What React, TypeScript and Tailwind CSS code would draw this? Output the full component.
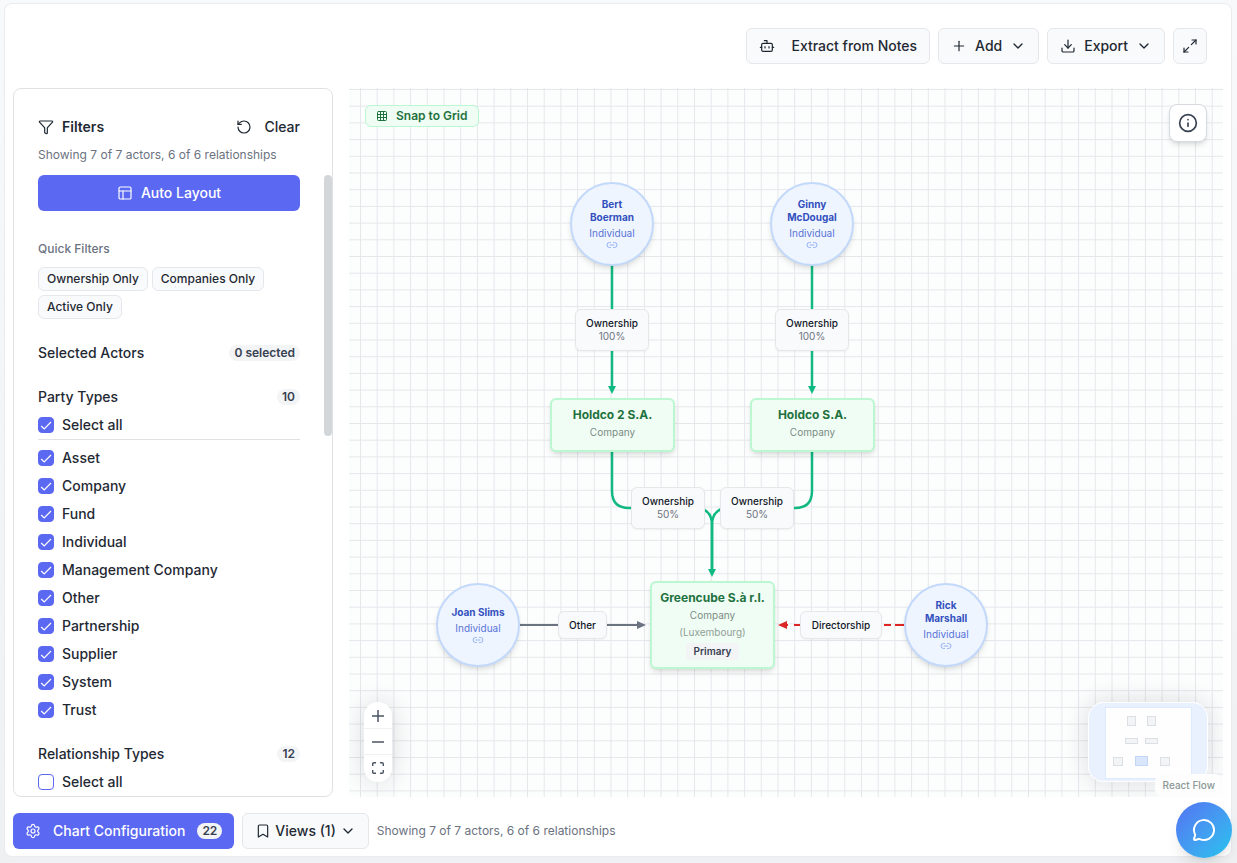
import React, { useState } from "react";
import {
  Bookmark,
  Bot,
  ChevronDown,
  Download,
  Funnel,
  Grid3x3,
  Info,
  Link2,
  Maximize2,
  MessageCircle,
  PanelsTopLeft,
  Plus,
  RotateCcw,
  Settings,
} from "lucide-react";

const secondaryButton =
  "flex h-9 items-center rounded-md border border-[#e5e7eb] bg-[#f9fafb] text-sm font-medium text-[#1f2933] hover:bg-gray-100";

const partyTypes = [
  "Asset",
  "Company",
  "Fund",
  "Individual",
  "Management Company",
  "Other",
  "Partnership",
  "Supplier",
  "System",
  "Trust",
];

function CheckRow({ label, defaultChecked = false }: { label: string; defaultChecked?: boolean }) {
  const [checked, setChecked] = useState(defaultChecked);
  return (
    <label className="flex h-5 items-center gap-2 text-sm font-medium">
      <span className="relative flex size-4 shrink-0">
        <input
          type="checkbox"
          checked={checked}
          onChange={(e) => setChecked(e.target.checked)}
          className="peer size-4 appearance-none rounded-sm border border-[#5b68f1] bg-white checked:bg-[#5b68f1]"
        />
        <svg
          viewBox="0 0 16 16"
          className="pointer-events-none absolute inset-0 hidden size-4 peer-checked:block"
          fill="none"
          stroke="#ffffff"
          strokeWidth="1.2"
          aria-hidden="true"
        >
          <path d="M3.2 9l3 3 6.8-7" />
        </svg>
      </span>
      {label}
    </label>
  );
}

function CountBadge({ children }: { children: React.ReactNode }) {
  return (
    <span className="flex h-4 items-center rounded-full bg-[#f3f4f6] px-[5px] text-xs font-semibold text-[#374151]">
      {children}
    </span>
  );
}

function Filters() {
  return (
    <aside className="flex w-80 shrink-0 flex-col overflow-hidden rounded-lg border border-[#dfe1e5] bg-white">
      <div className="flex flex-col pt-7 pr-8 pl-6">
        <div className="flex h-5 items-center justify-between text-sm font-semibold">
          <h2 className="flex items-center gap-2">
            <Funnel size={16} strokeWidth={1.8} />
            Filters
          </h2>
          <button type="button" className="flex items-center gap-3 font-medium">
            <RotateCcw size={16} strokeWidth={1.8} />
            Clear
          </button>
        </div>
        <p className="mt-2 text-xs leading-5 whitespace-nowrap text-[#6b7280]">
          Showing 7 of 7 actors, 6 of 6 relationships
        </p>
      </div>
      <div className="mt-[10px] flex min-h-0 flex-1">
        <div className="min-w-0 flex-1 overflow-hidden pl-6">
          <button
            type="button"
            className="flex h-9 w-full items-center justify-center gap-2 rounded-md bg-[#5b68f1] text-sm font-medium text-white"
          >
            <PanelsTopLeft size={16} strokeWidth={1.8} />
            Auto Layout
          </button>

          <h3 className="mt-7 text-xs leading-5 font-medium text-[#6b7280]">Quick Filters</h3>
          <div className="mt-2 flex flex-wrap gap-1">
            {["Ownership Only", "Companies Only", "Active Only"].map((label) => (
              <button
                key={label}
                type="button"
                className="h-6 rounded-md border border-[#e5e7eb] bg-[#f9fafb] px-2 text-xs font-medium"
              >
                {label}
              </button>
            ))}
          </div>

          <div className="mt-6 flex h-5 items-center justify-between text-sm font-medium">
            <h3>Selected Actors</h3>
            <CountBadge>0 selected</CountBadge>
          </div>

          <div className="mt-6 flex h-5 items-center justify-between text-sm font-medium">
            <h3>Party Types</h3>
            <CountBadge>10</CountBadge>
          </div>
          <div className="mt-2 border-b border-[#dfe1e5] pb-1">
            <CheckRow label="Select all" defaultChecked />
          </div>
          <div className="mt-2 flex flex-col gap-2">
            {partyTypes.map((type) => (
              <CheckRow key={type} label={type} defaultChecked />
            ))}
          </div>

          <div className="mt-6 flex h-5 items-center justify-between text-sm font-medium">
            <h3>Relationship Types</h3>
            <CountBadge>12</CountBadge>
          </div>
          <div className="mt-2 border-b border-[#dfe1e5] pb-1">
            <CheckRow label="Select all" />
          </div>
        </div>
        <div className="ml-6 w-2 shrink-0">
          <div className="h-[42%] rounded-full bg-[#d3d7d9]" />
        </div>
      </div>
    </aside>
  );
}

function PersonNode({ name, className }: { name: string; className: string }) {
  return (
    <div
      className={`absolute flex size-[84px] flex-col items-center justify-center rounded-full border-2 border-[#c3d9fb] bg-[#eff5ff] text-center shadow-md ${className}`}
    >
      <strong className="w-16 text-[10px] leading-[13px] font-bold text-[#3350bd]">{name}</strong>
      <span className="mt-[3px] text-[10px] leading-[13px] text-[#5874d8]">Individual</span>
      <Link2 size={12} strokeWidth={2} className="-my-px text-[#93b1f3]" />
    </div>
  );
}

function CompanyNode({
  name,
  className,
  children,
}: {
  name: string;
  className: string;
  children?: React.ReactNode;
}) {
  return (
    <div
      className={`absolute flex w-[125px] flex-col items-center rounded-md border-2 border-[#bbf7d0] bg-[#f0fdf4] pt-[7px] text-center shadow-md ${className}`}
    >
      <strong className="text-xs leading-4 font-bold whitespace-nowrap text-[#1f7240]">{name}</strong>
      <span className="mt-[3px] text-[10px] leading-[13px] text-[#7b8b85]">Company</span>
      {children}
    </div>
  );
}

function EdgeLabel({ title, value, className }: { title: string; value?: string; className: string }) {
  return (
    <div
      className={`absolute flex flex-col items-center justify-center rounded-md border border-[#e5e7eb] bg-[#f9fafb] text-[10px] leading-[13px] shadow-xs ${className}`}
    >
      <span className="font-medium text-[#111827]">{title}</span>
      {value && <span className="text-[#6b7280]">{value}</span>}
    </div>
  );
}

function Edges() {
  return (
    <svg className="absolute inset-0 size-full" aria-hidden="true">
      <defs>
        <pattern id="grid" x="11" y="1" width="16.7" height="16.7" patternUnits="userSpaceOnUse">
          <path d="M0.5 0V16.7M0 0.5H16.7" stroke="#e5e7eb" strokeWidth="1" />
        </pattern>
      </defs>
      <rect width="100%" height="100%" fill="url(#grid)" />
      <g fill="none" stroke="#10b981" strokeWidth="2.5">
        <path d="M263 177V302" />
        <path d="M463 177V302" />
        <path d="M263 362V403Q263 420 280 420H346Q363 420 363 437V484" />
        <path d="M463 362V403Q463 420 446 420H380Q363 420 363 437V484" />
      </g>
      <g fill="#10b981">
        <path d="M259 298h8l-4 8z" />
        <path d="M459 298h8l-4 8z" />
        <path d="M359 481h8l-4 8z" />
      </g>
      <path d="M171 537H292" stroke="#6b7280" strokeWidth="1.8" />
      <path d="M288 533v8l9-4z" fill="#6b7280" />
      <path d="M555 537H433" stroke="#dc2626" strokeWidth="1.8" strokeDasharray="9 4 7 84 6 6 6 0" />
      <path d="M438 533v8l-9-4z" fill="#dc2626" />
    </svg>
  );
}

function MiniMap() {
  return (
    <svg viewBox="0 0 120 80" className="h-20 w-[120px]" role="img" aria-label="Mini map">
      <rect x="0.5" y="0.5" width="119" height="79" rx="15" fill="#eaf1fe" stroke="#ffffff" />
      <rect x="17.5" y="5.5" width="86" height="71" fill="#fefefe" stroke="#c7dafb" strokeDasharray="1 1" />
      <g fill="#f3f4f6" stroke="#dcdfe4">
        <rect x="39.5" y="14.5" width="8" height="9" />
        <rect x="59.5" y="14.5" width="8" height="9" />
        <rect x="37.5" y="36.5" width="12" height="5" />
        <rect x="57.5" y="36.5" width="12" height="5" />
        <rect x="25.5" y="55.5" width="9" height="8" />
        <rect x="72.5" y="55.5" width="9" height="8" />
      </g>
      <rect x="47.5" y="54.5" width="12" height="9" fill="#dae6fb" stroke="#c3d6f8" />
    </svg>
  );
}

function Canvas() {
  return (
    <section className="relative min-w-0 flex-1 overflow-hidden bg-[#fcfdfd]" aria-label="Ownership chart">
      <Edges />

      <PersonNode name="Bert Boerman" className="top-[94px] left-[221px]" />
      <PersonNode name="Ginny McDougal" className="top-[94px] left-[421px]" />
      <PersonNode name="Joan Slims" className="top-[495px] left-[87px]" />
      <PersonNode name="Rick Marshall" className="top-[495px] left-[555px]" />

      <CompanyNode name="Holdco 2 S.A." className="top-[310px] left-[201px] h-[54px]" />
      <CompanyNode name="Holdco S.A." className="top-[310px] left-[401px] h-[54px]" />
      <CompanyNode name="Greencube S.à r.l." className="top-[493px] left-[301px] h-[88px]">
        <span className="mt-1 text-[10px] leading-[13px] text-[#8f9e98]">(Luxembourg)</span>
        <span className="mt-1 rounded-sm bg-[#f3f4f6] px-2 text-[10px] leading-[17px] font-semibold text-[#374151]">
          Primary
        </span>
      </CompanyNode>

      <EdgeLabel title="Ownership" value="100%" className="top-[221px] left-[226px] h-[42px] w-[74px]" />
      <EdgeLabel title="Ownership" value="100%" className="top-[221px] left-[426px] h-[42px] w-[74px]" />
      <EdgeLabel title="Ownership" value="50%" className="top-[399px] left-[282px] h-[42px] w-[74px]" />
      <EdgeLabel title="Ownership" value="50%" className="top-[399px] left-[371px] h-[42px] w-[74px]" />
      <EdgeLabel title="Other" className="top-[523px] left-[209px] h-7 w-[49px]" />
      <EdgeLabel title="Directorship" className="top-[523px] left-[451px] h-7 w-[82px]" />

      <button
        type="button"
        className="absolute top-[17px] left-4 flex h-[22px] items-center gap-2 rounded-md border border-[#bbf7d0] bg-[#f0fdf4] px-[10px] text-xs font-semibold text-[#1f7240]"
      >
        <Grid3x3 size={12} strokeWidth={2} />
        Snap to Grid
      </button>

      <button
        type="button"
        aria-label="Chart information"
        className="absolute top-4 right-4 flex size-[38px] items-center justify-center rounded-lg border border-[#d7dade] bg-white text-[#374151] shadow-md"
      >
        <Info size={20} strokeWidth={2} />
      </button>

      <div className="absolute bottom-[15px] left-[15px] flex w-7 flex-col overflow-hidden rounded-full bg-white py-px text-[#4b5563] shadow-[0_0_24px_rgba(31,41,55,0.16)]">
        <button type="button" aria-label="Zoom in" className="flex h-[26px] items-center justify-center border-b border-[#f0f1f3]">
          <svg width="12" height="12" viewBox="0 0 12 12" stroke="currentColor" strokeWidth="1.5">
            <path d="M6 0v12M0 6h12" />
          </svg>
        </button>
        <button type="button" aria-label="Zoom out" className="flex h-[26px] items-center justify-center border-b border-[#f0f1f3]">
          <svg width="12" height="12" viewBox="0 0 12 12" stroke="currentColor" strokeWidth="1.5">
            <path d="M0 6h12" />
          </svg>
        </button>
        <button type="button" aria-label="Fit view" className="flex h-[26px] items-center justify-center">
          <svg width="12" height="12" viewBox="0 0 12 12" fill="none" stroke="currentColor" strokeWidth="1.4">
            <path d="M0.7 4V2Q0.7 0.7 2 0.7H4M8 0.7h2Q11.3 0.7 11.3 2v2M11.3 8v2q0 1.3-1.3 1.3H8M4 11.3H2Q0.7 11.3 0.7 10V8" />
          </svg>
        </button>
      </div>

      <div className="absolute right-[15px] bottom-[15px] rounded-2xl shadow-[0_0_24px_rgba(31,41,55,0.16)]">
        <MiniMap />
      </div>
      <a
        href="https://reactflow.dev"
        className="absolute right-0 bottom-0 flex h-[23px] items-center rounded-lg bg-[#fdfdfd] px-2 text-[10px] font-medium text-[#8b9895]"
      >
        React Flow
      </a>
    </section>
  );
}

export default function App() {
  return (
    <div className="h-screen min-h-[600px] bg-linear-to-b from-[#f8f9fb] to-[#eff0f2] pt-[3px] pr-[5px] pb-[6px] pl-1 font-['Inter',sans-serif] text-[#1f2933]">
      <div className="flex h-full flex-col rounded-lg border border-[#e9ebee] bg-white px-2 pb-[7px]">
        <header className="flex shrink-0 justify-end gap-2 py-6 pr-4">
          <button type="button" className={`${secondaryButton} gap-4 px-3`}>
            <Bot size={16} strokeWidth={1.8} />
            Extract from Notes
          </button>
          <button type="button" className={`${secondaryButton} gap-2 px-3`}>
            <Plus size={16} strokeWidth={1.8} />
            Add
            <ChevronDown size={16} strokeWidth={2} />
          </button>
          <button type="button" className={`${secondaryButton} gap-2 px-3`}>
            <Download size={16} strokeWidth={1.8} />
            Export
            <ChevronDown size={16} strokeWidth={2} />
          </button>
          <button type="button" aria-label="Full screen" className={`${secondaryButton} w-[34px] justify-center`}>
            <Maximize2 size={16} strokeWidth={1.8} />
          </button>
        </header>

        <main className="flex min-h-0 flex-1 gap-4">
          <Filters />
          <Canvas />
        </main>

        <footer className="mt-4 flex shrink-0 items-center gap-2">
          <button
            type="button"
            className="flex h-9 items-center gap-3 rounded-md bg-[#5b68f1] px-3 text-sm font-medium text-white"
          >
            <Settings size={16} strokeWidth={1.8} />
            Chart Configuration
            <CountBadge>22</CountBadge>
          </button>
          <button type="button" className={`${secondaryButton} gap-1 px-3`}>
            <Bookmark size={16} strokeWidth={1.8} />
            Views (1)
            <ChevronDown size={16} strokeWidth={2} />
          </button>
          <p className="text-xs text-[#6b7280]">Showing 7 of 7 actors, 6 of 6 relationships</p>
        </footer>
      </div>

      <button
        type="button"
        aria-label="Open chat"
        className="fixed right-[5px] bottom-[5px] flex size-14 items-center justify-center rounded-full bg-linear-to-br from-[#5271f2] to-[#22c3ee] text-white shadow-lg"
      >
        <MessageCircle size={24} strokeWidth={2} />
      </button>
    </div>
  );
}
